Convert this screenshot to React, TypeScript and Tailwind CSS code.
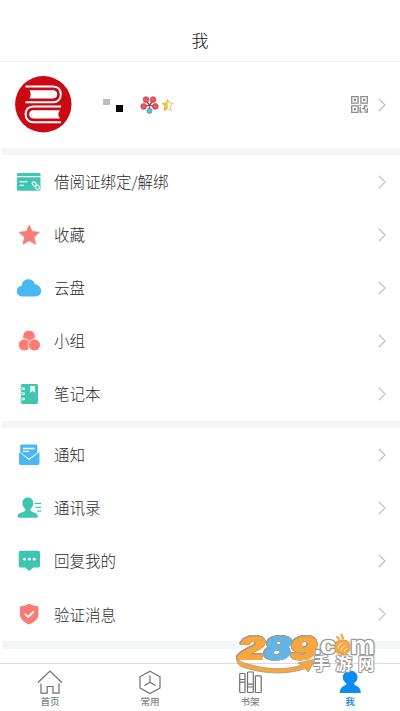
import type { ReactNode } from "react";

const TEAL = "#3fc6b0";
const CORAL = "#fb7c73";
const SKY = "#48b8f3";

function Icon({ children }: { children: ReactNode }) {
  return (
    <svg width="28" height="28" viewBox="0 0 28 28" fill="none" className="shrink-0">
      {children}
    </svg>
  );
}

function Chevron() {
  return (
    <svg width="8" height="14" viewBox="0 0 8 14" fill="none" stroke="#c3c3c3" strokeWidth="1.3" className="shrink-0">
      <path d="M0.8 0.8 7 7 0.8 13.2" />
    </svg>
  );
}

const libraryItems = [
  {
    label: "借阅证绑定/解绑",
    icon: (
      <Icon>
        <path d="M2 6.2Q2 5 3.2 5H24.3Q25.5 5 25.5 6.2V8H2Z" fill={TEAL} />
        <path d="M2 9.2H25.5V21.6Q25.5 22.8 24.3 22.8H3.2Q2 22.8 2 21.6Z" fill={TEAL} />
        <path d="M4.5 13.7H12.5M4.5 17.3H9" stroke="#fff" strokeWidth="1.2" />
        <g stroke="#fff" strokeWidth="1.1">
          <rect x="-1.6" y="-3" width="3.2" height="5.2" rx="1.6" transform="translate(19.6 16.5) rotate(-40)" />
          <rect x="-1.6" y="-2.6" width="3.2" height="5.2" rx="1.6" transform="translate(22.2 19.2) rotate(-40)" />
        </g>
      </Icon>
    ),
  },
  {
    label: "收藏",
    icon: (
      <Icon>
        <path
          d="M14.3 4.3 17 10.6 24.3 11.3 18.9 16.1 20.5 23.2 14.3 19.5 8.1 23.2 9.7 16.1 4.2 11.3 11.5 10.6Z"
          fill={CORAL}
          stroke={CORAL}
          strokeWidth="1"
          strokeLinejoin="round"
        />
      </Icon>
    ),
  },
  {
    label: "云盘",
    icon: (
      <Icon>
        <path
          d="M7.5 22.5C4 22.5 1.8 20 1.8 17.2C1.8 14.3 4 12.2 6.7 11.8C6.9 8 9.8 5.3 13.4 5.3C16.5 5.3 19 7 20 10.2C23.5 10.8 26.2 13.2 26.2 16.8C26.2 20.2 23.8 22.5 20.5 22.5Z"
          fill={SKY}
        />
      </Icon>
    ),
  },
  {
    label: "小组",
    icon: (
      <Icon>
        <circle cx="14" cy="9.4" r="5.9" fill={CORAL} />
        <circle cx="9.4" cy="17.9" r="6" fill={CORAL} stroke="#fff" strokeWidth=".8" />
        <circle cx="19.4" cy="17.9" r="6" fill={CORAL} stroke="#fff" strokeWidth=".8" />
      </Icon>
    ),
  },
  {
    label: "笔记本",
    icon: (
      <Icon>
        <rect x="6" y="4" width="17" height="20" rx="1.4" fill={TEAL} />
        <path d="M5.4 8.8H8.8M5.4 13.7H8.8M5.4 18.9H8.8" stroke="#fff" strokeWidth="2.5" strokeLinecap="round" />
        <path d="M5.2 8.9H8.1M5.2 13.8H8.1M5.2 19H8.1" stroke={TEAL} strokeWidth="1" />
        <path d="M15.3 6H20V12.8L17.7 10.8 15.3 12.8Z" fill="#fff" />
      </Icon>
    ),
  },
];

const messageItems = [
  {
    label: "通知",
    icon: (
      <Icon>
        <path d="M5.2 4.8Q5.2 3.6 6.4 3.6H21.1Q22.3 3.6 22.3 4.8V12.5L13.9 17.6 5.2 12.5Z" fill={SKY} />
        <path d="M7.8 7.5H19.5M7.8 10.4H14" stroke="#fff" strokeWidth="1.3" />
        <path d="M4 10.9 14 18.7 24.5 10.9V22.6Q24.5 24 23.1 24H5.4Q4 24 4 22.6Z" fill={SKY} />
        <path d="M4 10.6 14 18.2 24.5 10.6" stroke="#fff" strokeWidth=".9" />
      </Icon>
    ),
  },
  {
    label: "通讯录",
    icon: (
      <Icon>
        <path
          d="M12.8 3.6C16.3 3.6 18.3 6.2 18.3 9.2C18.3 11.5 17.3 13.5 15.5 14.9V16.8C16.8 18.5 22.9 18.4 22.9 22.3Q22.9 23.8 21.3 23.8H4Q2.6 23.8 2.6 22.3C2.6 18.4 9 18.5 10.2 16.8V14.9C8.4 13.5 7.4 11.5 7.4 9.2C7.4 6.2 9.3 3.6 12.8 3.6Z"
          fill={TEAL}
        />
        <path d="M19.5 9.3H26M20.5 13.3H26M22.3 17.2H26" stroke={TEAL} strokeWidth="1.2" />
      </Icon>
    ),
  },
  {
    label: "回复我的",
    icon: (
      <Icon>
        <path d="M5.4 3.8H23.2Q25 3.8 25 5.7V18.7Q25 20.5 23.2 20.5H18.6L14.3 24 10.1 20.5H5.4Q3.7 20.5 3.7 18.7V5.7Q3.7 3.8 5.4 3.8Z" fill={TEAL} />
        <circle cx="9.6" cy="12.2" r="1.4" fill="#fff" />
        <circle cx="14.4" cy="12.2" r="1.4" fill="#fff" />
        <circle cx="19.2" cy="12.2" r="1.4" fill="#fff" />
      </Icon>
    ),
  },
  {
    label: "验证消息",
    icon: (
      <Icon>
        <path d="M14.2 3.5C17 5.3 20.2 6.2 23.5 6.4V14C23.5 19.5 19 22.5 14.2 24.6C9.4 22.5 5 19.5 5 14V6.4C8.4 6.2 11.4 5.3 14.2 3.5Z" fill={CORAL} />
        <path d="M9.9 13.8 13.2 17 18.9 11.3" stroke="#fff" strokeWidth="1.8" />
      </Icon>
    ),
  },
];

function MenuList({ items }: { items: { label: string; icon: ReactNode }[] }) {
  return (
    <ul>
      {items.map((item) => (
        <li key={item.label} className="flex h-[53.15px] items-center pr-[14px] pl-[15px]">
          {item.icon}
          <span className="ml-[11px] flex-1 text-[15.5px] leading-none font-light text-[#2b2b2b]">{item.label}</span>
          <Chevron />
        </li>
      ))}
    </ul>
  );
}

function Divider() {
  return <div className="ml-[2px] h-[7.6px] shrink-0 bg-[#f4f5f6]" />;
}

function Avatar() {
  return (
    <svg width="57" height="57" viewBox="0 0 57 57" fill="none" className="shrink-0">
      <circle cx="28.3" cy="28.2" r="28.2" fill="#cb0814" />
      <g transform="translate(0 -.6)">
        <path d="M10.5 11H38.2C43.3 11 45.8 14.7 45.8 18.9C45.8 23.2 43.2 26.8 38.2 26.8H10.5" stroke="#fff" strokeWidth="2" />
        <path d="M14.5 14.8H37.6C41 14.8 42.2 16.6 42.2 18.9C42.2 21.2 41 23 37.6 23H14.5Q17 18.9 14.5 14.8Z" fill="#fff" />
        <path d="M46 31H18.2C13.1 31 10.6 34.7 10.6 38.9C10.6 43.2 13.2 46.8 18.2 46.8H46" stroke="#fff" strokeWidth="2" />
        <path d="M45 34.8H18.8C15.4 34.8 14.2 36.6 14.2 38.9C14.2 41.2 15.4 43 18.8 43H45Q41.5 38.9 45 34.8Z" fill="#fff" />
      </g>
    </svg>
  );
}

function Badges() {
  return (
    <svg width="36" height="20" viewBox="0 0 36 20" fill="none" className="shrink-0">
      <g stroke="#a23b46" strokeWidth=".6" fill="#f0525f">
        <path d="M9.5 10 5.5 5M9.5 10 13.5 5M9.5 10 3.7 12M9.5 10 15.3 12M9.5 10V15" strokeWidth="1.3" />
        <circle cx="6" cy="4.6" r="2.9" />
        <circle cx="13" cy="4.6" r="2.9" />
        <circle cx="3.7" cy="11.4" r="2.9" />
        <circle cx="15.3" cy="11.4" r="2.9" />
        <circle cx="9.5" cy="15.8" r="2.6" fill="#5ac4dc" stroke="#397f95" />
      </g>
      <path d="M27.7 4.3V13.4L24 15.8 24.8 11.2 22.2 8.4 26.2 7.8Z" fill="#f6c52d" />
      <path d="M27.7 4.3 29.3 7.8 33.2 8.2 30.4 11.2 31.2 15.6 27.7 13.4 24 15.8 24.8 11.2 22.2 8.4 26.2 7.8Z" stroke="#dfae48" strokeWidth=".8" />
    </svg>
  );
}

function QrIcon() {
  return (
    <svg width="17" height="17" viewBox="0 0 17 17" fill="none" stroke="#8b8b8b" strokeWidth="1.3" className="shrink-0">
      <path d="M.7.7H7.1V7.1H.7ZM9.9.7H16.3V7.1H9.9ZM.7 9.9H7.1V16.3H.7Z" />
      <path d="M2.7 2.7H5.1V5.1H2.7ZM12 2.8H14.2V5H12ZM2.8 12H5V14.2H2.8Z" fill="#8b8b8b" stroke="none" />
      <path d="M8.5 9.3H10.3M9.2 11V16.2H11.5M11.2 12.5H13.5V10H16.5M13.2 16.2H16.3V12M13.4 14.2H15" />
    </svg>
  );
}

const tabs = [
  {
    label: "首页",
    icon: (
      <path d="M2 12.5 14 1 25.8 12.5M5 13.5V23.2H11.2V16.5H17V23.2H23V13.5" />
    ),
  },
  {
    label: "常用",
    icon: (
      <path d="M14 1.2 24 6.7V18L14 23.5 4 18V6.7ZM14 5.5V12.3L8.5 15.5M14 12.3 19.5 15.5" strokeLinejoin="round" />
    ),
  },
  {
    label: "书架",
    icon: (
      <g>
        <rect x="3.7" y="3.5" width="5.3" height="19" rx=".7" />
        <rect x="11.5" y="2" width="5.8" height="20.5" rx=".7" />
        <rect x="19.4" y="5.8" width="5.8" height="16.7" rx=".7" />
        <path d="M4 9.5H8.7M4 12.2H8.7M12 14.2H17M12 17H17" />
      </g>
    ),
  },
  {
    label: "我",
    active: true,
    icon: (
      <path
        d="M14.2 0.5C18.2 0.5 21.6 3.6 21.6 7.2C21.6 9.9 20 12.2 17.8 13.4C17.8 16 24.8 15 24.8 23H3.8C3.8 15 10.6 16 10.6 13.4C8.4 12.2 6.8 9.9 6.8 7.2C6.8 3.6 10.2 0.5 14.2 0.5Z"
        fill="#0b8df2"
        stroke="none"
      />
    ),
  },
];

function TabBar() {
  return (
    <nav className="grid h-[48px] shrink-0 grid-cols-4 border-t border-[#d9dbdd] bg-white">
      {tabs.map((tab) => (
        <div key={tab.label} className="flex flex-col items-center pt-[6px]">
          <svg width="28" height="24" viewBox="0 0 28 24" fill="none" stroke="#707070" strokeWidth="1.2">
            {tab.icon}
          </svg>
          <span
            className={
              tab.active
                ? "mt-[2px] text-[9.6px] leading-[11px] font-medium text-[#0b7fe0]"
                : "mt-[2px] text-[9.6px] leading-[11px] font-medium text-[#858585]"
            }
          >
            {tab.label}
          </span>
        </div>
      ))}
    </nav>
  );
}

function Watermark() {
  return (
    <svg
      width="150"
      height="48"
      viewBox="0 0 150 48"
      className="pointer-events-none absolute top-[628px] left-[232px]"
      fill="none"
      strokeLinejoin="round"
    >
      <path
        d="M6 29C2 35 8 39.5 19 41.5C38 47 60 45.5 73 40.5L76.5 44 83 31 66 35 69.5 37C57 41.5 38 42 22 37.5C12 35 6 34 6 29Z"
        fill="#f9a63c"
        stroke="#a09a94"
        strokeWidth=".8"
      />
      <g
        fontFamily="Liberation Sans"
        fontWeight="700"
        fontSize="31"
        strokeWidth="2"
        className="[filter:drop-shadow(0.7px_0_0_#a09a94)_drop-shadow(-0.7px_0_0_#a09a94)_drop-shadow(0_0.7px_0_#a09a94)_drop-shadow(0_-0.7px_0_#a09a94)]"
      >
        <text transform="translate(5 31) skewX(-12) scale(1.5 1)" fill="#f9a63c" stroke="#f9a63c">2</text>
        <text transform="translate(57 31) skewX(-12) scale(1.5 1)" fill="#f9a63c" stroke="#f9a63c">9</text>
        <text transform="translate(31 31) skewX(-12) scale(1.5 1)" fill="#62b5e8" stroke="#62b5e8">8</text>
      </g>
      <g fontFamily="Liberation Sans" fontWeight="700" fontSize="26" strokeWidth="2.6" paintOrder="stroke" stroke="#999" fill="#fff">
        <text x="82" y="26">.</text>
        <text x="88" y="26" textLength="16" lengthAdjust="spacingAndGlyphs">c</text>
        <text x="118" y="26" textLength="25" lengthAdjust="spacingAndGlyphs">m</text>
        <text x="102" y="26" textLength="17" lengthAdjust="spacingAndGlyphs" fill="#f9a63c" stroke="#c99152" strokeWidth="1">o</text>
      </g>
      <circle cx="110.5" cy="19.5" r="7.5" fill="#f9a63c" />
      <path d="M106 21Q106 16 111 15M109 22.5Q109 19 113.5 17.5M112 24Q112 21.5 115 20.5" stroke="#fff" strokeWidth=".9" />
      <path d="M107 11 105 9M111 10.5 109.5 6.5" stroke="#f9a63c" strokeWidth="2.2" strokeLinecap="round" />
      <text x="81 103.5 126" y="41.5" fontFamily="Noto Sans CJK SC" fontWeight="700" fontSize="16.5" fill="#fff" stroke="#999" strokeWidth="2" paintOrder="stroke">手游网</text>
    </svg>
  );
}

export default function App() {
  return (
    <div className="relative flex h-[711px] w-[400px] flex-col overflow-hidden bg-white font-['Noto_Sans_CJK_SC',sans-serif]">
      <header className="flex h-[62px] shrink-0 items-end justify-center border-b border-[#eeeeee] pb-[13px]">
        <h1 className="text-[17px] leading-[17px] font-light text-[#111]">我</h1>
      </header>
      <section className="flex h-[85.5px] shrink-0 items-center pr-[14px] pl-[15px]">
        <Avatar />
        <div className="ml-[31px] flex h-[14px] w-[20px] items-start">
          <span className="mt-[1px] h-[6.5px] w-[6.5px] bg-[#bdbdbd]" />
          <span className="mt-[7px] ml-[6px] h-[7px] w-[7px] bg-black" />
        </div>
        <div className="ml-[16.5px] flex-1">
          <Badges />
        </div>
        <QrIcon />
        <span className="ml-[10px]">
          <Chevron />
        </span>
      </section>
      <Divider />
      <MenuList items={libraryItems} />
      <Divider />
      <MenuList items={messageItems} />
      <Divider />
      <div className="flex-1" />
      <TabBar />
      <Watermark />
    </div>
  );
}
